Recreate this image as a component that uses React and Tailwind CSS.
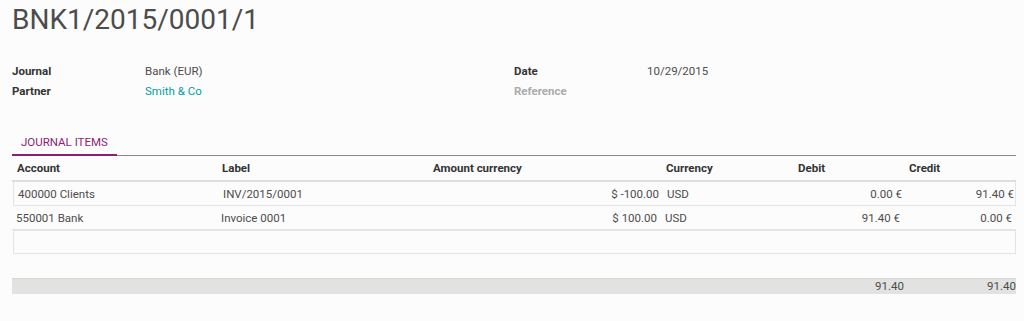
const columns = [
  { title: "Account", align: "left" },
  { title: "Label", align: "left" },
  { title: "Amount currency", align: "right" },
  { title: "Currency", align: "left" },
  { title: "Debit", align: "right" },
  { title: "Credit", align: "right" },
];

const lines = [
  ["400000 Clients", "INV/2015/0001", "$ -100.00", "USD", "0.00 €", "91.40 €"],
  ["550001 Bank", "Invoice 0001", "$ 100.00", "USD", "91.40 €", "0.00 €"],
];

const grid = "grid grid-cols-[205px_211px_233px_132px_111px_112px]";

function Field({ label, children, muted }) {
  return (
    <div className="flex h-5 leading-5">
      <div
        className={
          "w-[133px] font-bold " + (muted ? "text-[#aaaaaa]" : "text-[#333333]")
        }
      >
        {label}
      </div>
      <div>{children}</div>
    </div>
  );
}

export default function App() {
  return (
    <div className="min-h-[321px] bg-[#fcfcfc] px-3 font-[Roboto,sans-serif] text-[11.5px] text-[#4c4c4c]">
      {/* Title */}
      <h1 className="pt-[3px] text-[28px] leading-[34px] text-[#4c4c4c]">
        BNK1/2015/0001/1
      </h1>

      {/* Header fields */}
      <div className="mt-6 flex">
        <div className="w-[502px]">
          <Field label="Journal">Bank (EUR)</Field>
          <Field label="Partner">
            <span className="text-[#00a09d]">Smith &amp; Co</span>
          </Field>
        </div>
        <div>
          <Field label="Date">10/29/2015</Field>
          <Field label="Reference" muted />
        </div>
      </div>

      {/* Tabs */}
      <div className="mt-[28px] flex w-[1004px] border-b border-[#888888]">
        <div className="-mb-px border-b-2 border-[#8f1d74] px-[9px] pt-px leading-6 text-[#8f1d74]">
          JOURNAL ITEMS
        </div>
      </div>

      {/* Journal items table */}
      <div className="w-[1004px]">
        <div className={grid + " h-[26px] border-b-2 border-[#dedede] font-bold leading-6 text-[#333333]"}>
          {columns.map((c) => (
            <div key={c.title} className="pl-[5px]">
              {c.title}
            </div>
          ))}
        </div>

        {lines.map((row, i) => (
          <div
            key={i}
            className={
              grid +
              " h-6 border-b border-[#e4e4e4] leading-6 " +
              (i === 0 ? "ml-px border-x" : "")
            }
          >
            {row.map((cell, j) => (
              <div
                key={j}
                className={
                  columns[j].align === "right"
                    ? "pr-[4px] text-right"
                    : "pl-[4px]"
                }
              >
                {cell}
              </div>
            ))}
          </div>
        ))}

        <div className="ml-px h-6 border-x border-b border-t border-[#e4e4e4]" />

        {/* Totals */}
        <div className={grid + " mt-[24px] h-4 border-t border-[#d8d8d8] bg-[#e2e2e0] leading-[15px] text-[#4c4c4c]"}>
          <div />
          <div />
          <div />
          <div />
          <div className="text-right">91.40</div>
          <div className="text-right">91.40</div>
        </div>
      </div>
    </div>
  );
}
